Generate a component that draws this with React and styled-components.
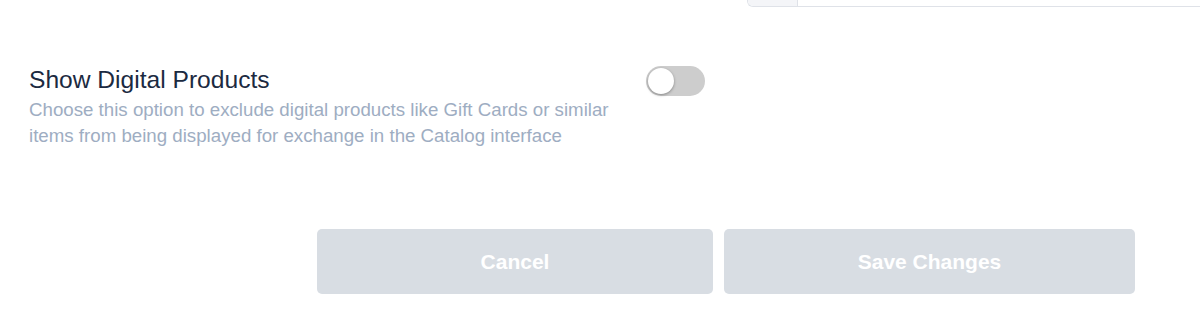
import React, { useState } from 'react';
import styled, { createGlobalStyle } from 'styled-components';

const GlobalStyle = createGlobalStyle`
  html, body {
    margin: 0;
    padding: 0;
    background: #ffffff;
    overflow: hidden;
  }
  body {
    font-family: "Liberation Sans", Arial, sans-serif;
  }
`;

function App() {
  const [showDigital, setShowDigital] = useState(false);

  return (
    <Page>
      <GlobalStyle />

      <FieldRow>
        <InputGroup>
          <Addon />
          <Input />
        </InputGroup>
      </FieldRow>

      <SettingRow>
        <SettingText>
          <SettingTitle>Show Digital Products</SettingTitle>
          <SettingHint>
            Choose this option to exclude digital products like Gift Cards or similar
            items from being displayed for exchange in the Catalog interface
          </SettingHint>
        </SettingText>
        <Toggle
          type="button"
          $on={showDigital}
          onClick={() => setShowDigital(!showDigital)}
          aria-pressed={showDigital}
        >
          <Knob $on={showDigital} />
        </Toggle>
      </SettingRow>

      <Actions>
        <ActionButton type="button" disabled>Cancel</ActionButton>
        <ActionButton type="button" disabled>Save Changes</ActionButton>
      </Actions>
    </Page>
  );
}

const Page = styled.div`
  width: 1200px;
  height: 332px;
  display: flex;
  flex-direction: column;
`;

// the bottom of an input that sits above the visible area
const FieldRow = styled.div`
  display: flex;
  justify-content: flex-end;
  margin-top: -40px;
  padding-left: 747px;
`;

const InputGroup = styled.div`
  flex: 1;
  display: flex;
  height: 45px;
  border: 1px solid #dfe2e8;
  border-right: none;
  border-radius: 0 0 0 6px;
  overflow: hidden;
`;

const Addon = styled.div`
  width: 49px;
  background: #f4f5f8;
  border-right: 1px solid #dfe2e8;
`;

const Input = styled.div`
  flex: 1;
  background: #ffffff;
`;

const SettingRow = styled.div`
  display: flex;
  align-items: flex-start;
  padding: 58px 0 0 29px;
`;

const SettingText = styled.div`
  width: 617px;
`;

const SettingTitle = styled.div`
  font-size: 24.6px;
  line-height: 30px;
  color: #1b2a41;
`;

const SettingHint = styled.div`
  margin-top: 2px;
  width: 600px;
  font-size: 18.7px;
  line-height: 26px;
  color: #9eadc2;
`;

const Toggle = styled.button`
  position: relative;
  width: 59px;
  height: 30px;
  margin-top: 1px;
  padding: 0;
  border: none;
  border-radius: 15px;
  background: ${p => (p.$on ? '#4a90e2' : '#cdcdcd')};
  cursor: pointer;
`;

const Knob = styled.span`
  position: absolute;
  top: 2px;
  left: ${p => (p.$on ? '31px' : '2px')};
  width: 26px;
  height: 26px;
  border-radius: 50%;
  background: #ffffff;
  box-shadow: 0 1px 3px rgba(0, 0, 0, 0.35);
`;

const Actions = styled.div`
  display: grid;
  grid-template-columns: 396px 411px;
  gap: 11px;
  justify-content: end;
  padding: 80px 65px 0 0;
`;

const ActionButton = styled.button`
  height: 65px;
  border: none;
  border-radius: 5px;
  background: #d8dde3;
  color: #ffffff;
  font-family: "Liberation Sans", Arial, sans-serif;
  font-weight: 700;
  font-size: 21px;
  cursor: default;
`;

export default App;
